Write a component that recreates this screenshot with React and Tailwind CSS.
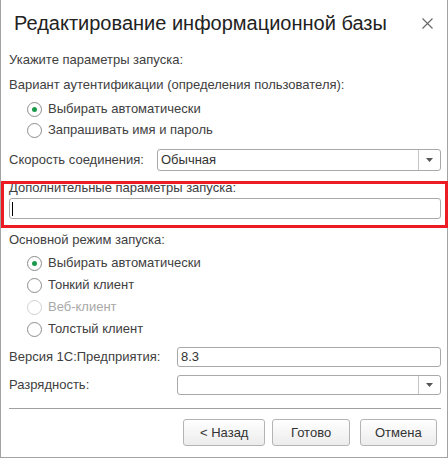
import React, { useState } from 'react';

// Радиокнопка в стиле 1С
const Radio = ({ label, checked, disabled, onClick }) => (
  <div
    className={`flex items-center h-[22px] pl-[18px] ${disabled ? 'text-[#a8a8a8]' : 'text-[#404040] cursor-pointer'}`}
    onClick={disabled ? undefined : onClick}
  >
    <span
      className={`w-[15px] h-[15px] rounded-full border bg-white flex items-center justify-center ${disabled ? 'border-[#d0d0d0]' : 'border-[#8c8c8c]'}`}
    >
      {checked && <span className="w-[5px] h-[5px] rounded-full bg-[#1b9a4b]" />}
    </span>
    <span className="ml-[6px] leading-[16px]">{label}</span>
  </div>
);

// Поле выбора со стрелкой
const Combo = ({ value, className }) => (
  <div className={`flex flex-1 border border-[#a9a9a9] rounded-[3px] bg-white ${className}`}>
    <div className="flex-1 pl-[3px] flex items-center text-[#333] leading-[16px]">{value}</div>
    <div className="w-[22px] border-l border-[#c4c4c4] flex items-center justify-center">
      <svg width="7" height="4" viewBox="0 0 7 4">
        <path d="M0 0h7L3.5 4z" fill="#555" />
      </svg>
    </div>
  </div>
);

const Button = ({ children }) => (
  <button
    type="button"
    className="h-[27px] border border-[#b4b4b4] rounded-[3px] bg-gradient-to-b from-white to-[#ececec] text-[#333] text-[13px] leading-[16px]"
  >
    {children}
  </button>
);

export default function App() {
  const [auth, setAuth] = useState(0);
  const [mode, setMode] = useState(0);

  return (
    <div
      className="relative w-[448px] h-[458px] border-x border-b border-[#a3a3a3] bg-white pt-[11px] pl-[8px] pr-[6px] text-[13px]"
      style={{ fontFamily: '"Liberation Sans", Arial, sans-serif' }}
    >
      {/* Заголовок */}
      <div className="h-[24px] flex items-center justify-between">
        <h1 className="pl-[5px] text-[20px] leading-[24px] text-[#222] font-normal">
          Редактирование информационной базы
        </h1>
        <svg width="11" height="11" viewBox="0 0 11 11" className="mr-[8px]">
          <path d="M0.5 0.5l10 10M10.5 0.5l-10 10" stroke="#666" strokeWidth="1.1" />
        </svg>
      </div>

      <div className="mt-[17px] h-[16px] leading-[16px] text-[#404040]">Укажите параметры запуска:</div>
      <div className="mt-[9px] h-[16px] leading-[16px] text-[#404040]">
        Вариант аутентификации (определения пользователя):
      </div>

      <div className="mt-[5px]">
        <div className="h-[21px] flex"><Radio label="Выбирать автоматически" checked={auth === 0} onClick={() => setAuth(0)} /></div>
        <div className="h-[21px] flex"><Radio label="Запрашивать имя и пароль" checked={auth === 1} onClick={() => setAuth(1)} /></div>
      </div>

      <div className="mt-[9px] h-[22px] flex items-center">
        <div className="w-[148px] leading-[16px] text-[#404040]">Скорость соединения:</div>
        <Combo value="Обычная" className="h-[22px]" />
      </div>

      {/* Дополнительные параметры */}
      <div className="mt-[9px] h-[16px] leading-[16px] text-[#404040]">Дополнительные параметры запуска:</div>
      <div className="mt-[2px] h-[21px] border border-[#a9a9a9] rounded-[3px] flex items-center pl-[2px]">
        <span className="w-px h-[14px] bg-black" />
      </div>

      <div className="mt-[13px] h-[16px] leading-[16px] text-[#404040]">Основной режим запуска:</div>
      <div className="mt-[4px]">
        <Radio label="Выбирать автоматически" checked={mode === 0} onClick={() => setMode(0)} />
        <Radio label="Тонкий клиент" checked={mode === 1} onClick={() => setMode(1)} />
        <Radio label="Веб-клиент" disabled />
        <Radio label="Толстый клиент" checked={mode === 3} onClick={() => setMode(3)} />
      </div>

      <div className="mt-[7px] h-[20px] flex items-center">
        <div className="w-[168px] leading-[16px] text-[#404040]">Версия 1С:Предприятия:</div>
        <div className="flex-1 h-[20px] border border-[#a9a9a9] rounded-[3px] pl-[3px] flex items-center text-[#333] leading-[16px]">
          8.3
        </div>
      </div>

      <div className="mt-[8px] h-[20px] flex items-center">
        <div className="w-[168px] leading-[16px] text-[#404040]">Разрядность:</div>
        <Combo value="" className="h-[20px]" />
      </div>

      <div className="mt-[13px] h-px bg-[#a0a0a0]" />

      <div className="mt-[10px] flex justify-end gap-[10px] pr-[3px]">
        <div className="w-[79px] flex"><Button><span className="px-[16px] whitespace-nowrap">&lt; Назад</span></Button></div>
        <div className="w-[78px] flex"><Button><span className="px-[18px]">Готово</span></Button></div>
        <div className="w-[78px] flex"><Button><span className="px-[14px]">Отмена</span></Button></div>
      </div>

      {/* Красная рамка-выделение поверх формы */}
      <div className="absolute top-[181px] left-0 w-[447px] h-[47px] border-[3px] border-[#ed1c24] pointer-events-none" />
    </div>
  );
}
